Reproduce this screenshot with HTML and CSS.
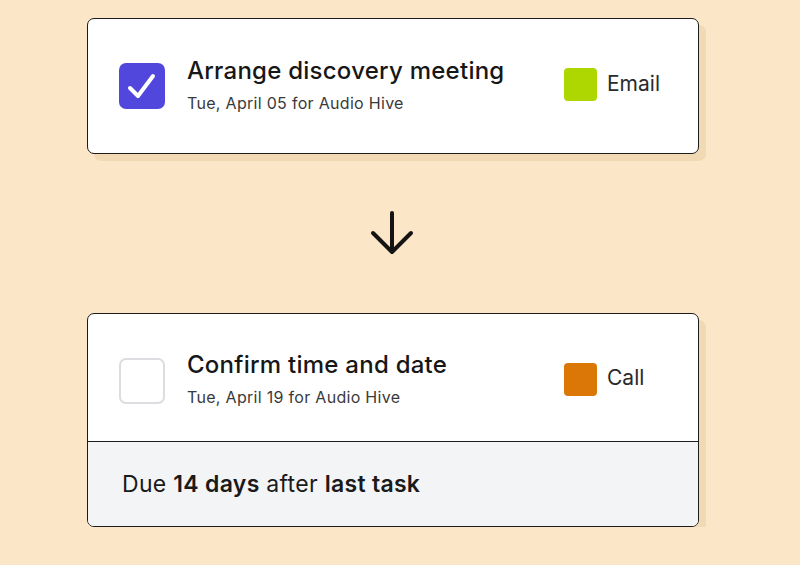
FILE: index.html
```html
<!DOCTYPE html>
<html>
<head>
<meta charset="utf-8">
<link rel="stylesheet" href="styles.css">
</head>
<body>
<main class="flow">
  <section class="card">
    <div class="task">
      <div class="check checked">
        <svg width="46" height="46" viewBox="0 0 46 46"><polyline points="11,25 19,33 34,13" fill="none" stroke="#fff" stroke-width="4" stroke-linecap="round" stroke-linejoin="round"/></svg>
      </div>
      <div class="info">
        <div class="title">Arrange discovery meeting</div>
        <div class="sub">Tue, April 05 for Audio Hive</div>
      </div>
      <div class="type"><span class="swatch email"></span><span class="type-label">Email</span></div>
    </div>
  </section>

  <div class="arrow">
    <svg width="46" height="48" viewBox="0 0 46 48"><path d="M23 4 V43 M4 24 L23 43 L42 24" fill="none" stroke="#141414" stroke-width="4" stroke-linecap="round" stroke-linejoin="round"/></svg>
  </div>

  <section class="card">
    <div class="task task2">
      <div class="check"></div>
      <div class="info">
        <div class="title">Confirm time and date</div>
        <div class="sub">Tue, April 19 for Audio Hive</div>
      </div>
      <div class="type"><span class="swatch call"></span><span class="type-label">Call</span></div>
    </div>
    <div class="due"><p class="due-text">Due <b>14 days</b> after <b>last task</b></p></div>
  </section>
</main>
</body>
</html>
```

FILE: styles.css
```css
html, body {
  margin: 0;
  padding: 0;
  background: #fbe7c8;
  font-family: "Inter", "Roboto", "Liberation Sans", sans-serif;
  color: #171717;
}
.flow {
  width: 612px;
  padding: 18px 0 0 87px;
  display: flex;
  flex-direction: column;
}
.card {
  background: #fff;
  border: 1.5px solid #1c1c1c;
  border-radius: 7px;
  box-shadow: 7px 7px 0 #f1d9b3;
  overflow: hidden;
  box-sizing: border-box;
}
.task {
  height: 134px;
  display: flex;
  align-items: center;
  padding: 0 36px 0 31px;
  box-sizing: border-box;
}
.task2 {
  height: 128px;
  padding-top: 6px;
  border-bottom: 1.5px solid #1c1c1c;
}
.check {
  width: 46px;
  height: 46px;
  border-radius: 7px;
  box-sizing: border-box;
  border: 2px solid #dcdde0;
  flex: none;
}
.check.checked {
  background: #5147dd;
  border: none;
}
.check svg { display: block; }
.info {
  flex: 1;
  margin-left: 22px;
  margin-top: -3px;
}
.title {
  font-size: 24px;
  font-weight: 500;
  letter-spacing: 0.25px;
  line-height: 28px;
}
.sub {
  font-size: 16px;
  color: #3a3a3a;
  letter-spacing: 0.3px;
  margin-top: 8px;
  line-height: 20px;
}
.type {
  width: 98px;
  display: flex;
  align-items: center;
  margin-top: -3px;
}
.swatch {
  width: 33px;
  height: 33px;
  border-radius: 4px;
  flex: none;
}
.swatch.email { background: #aed600; }
.swatch.call { background: #da7706; }
.type-label {
  margin-left: 10px;
  font-size: 21px;
  color: #2a2a2a;
  margin-top: -3px;
}
.arrow {
  height: 160px;
  display: flex;
  align-items: center;
  justify-content: center;
  margin-left: -2px;
  margin-top: -1px;
}
.arrow svg { display: block; }
.due {
  background: #f3f4f6;
  height: 84px;
  display: flex;
  align-items: center;
  padding-left: 34px;
}
.due-text {
  margin: 0;
  font-size: 23px;
  letter-spacing: 0.3px;
  color: #1a1a1a;
}
.due-text b { font-weight: 600; }
```
